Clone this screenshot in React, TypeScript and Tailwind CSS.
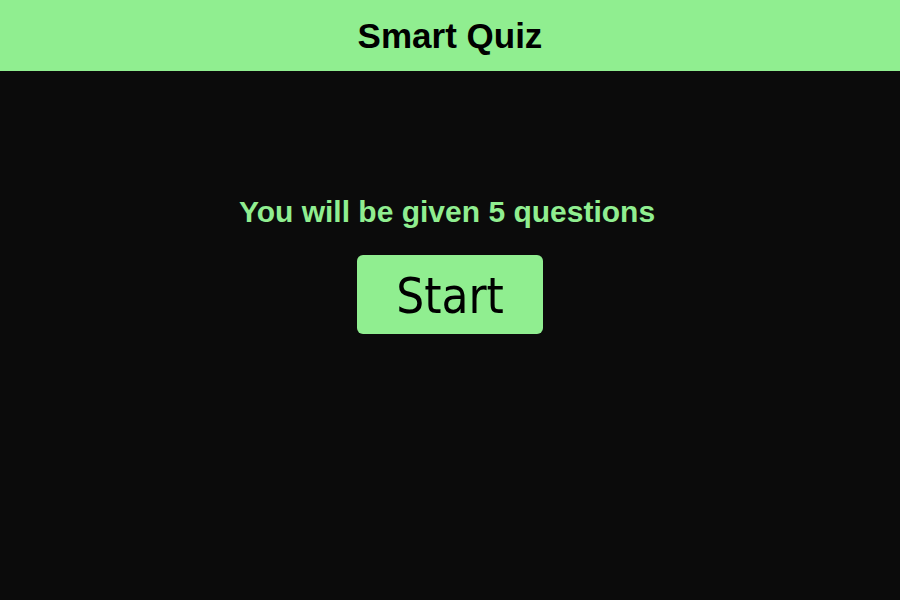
export default function App() {
  return (
    <div className="min-h-screen bg-[#0b0b0b] flex flex-col" style={{ fontFamily: '"Liberation Sans", Arial, sans-serif' }}>
      <header className="h-[71px] bg-[#90ee90] flex items-center justify-center">
        <h1 className="text-[35px] font-bold text-black leading-none">Smart Quiz</h1>
      </header>

      <main className="flex flex-col items-center pt-[124px]">
        <p className="text-[30px] leading-[34px] font-bold text-[#90ee90] pr-[6px]">You will be given 5 questions</p>
        <button
          className="mt-[26px] w-[186px] h-[79px] pt-[4px] rounded-[6px] bg-[#90ee90] text-black text-[49px] flex items-center justify-center"
          style={{ fontFamily: '"DejaVu Sans Condensed", "DejaVu Sans", Verdana, sans-serif', fontStretch: 'condensed' }}
        >
          Start
        </button>
      </main>
    </div>
  )
}
